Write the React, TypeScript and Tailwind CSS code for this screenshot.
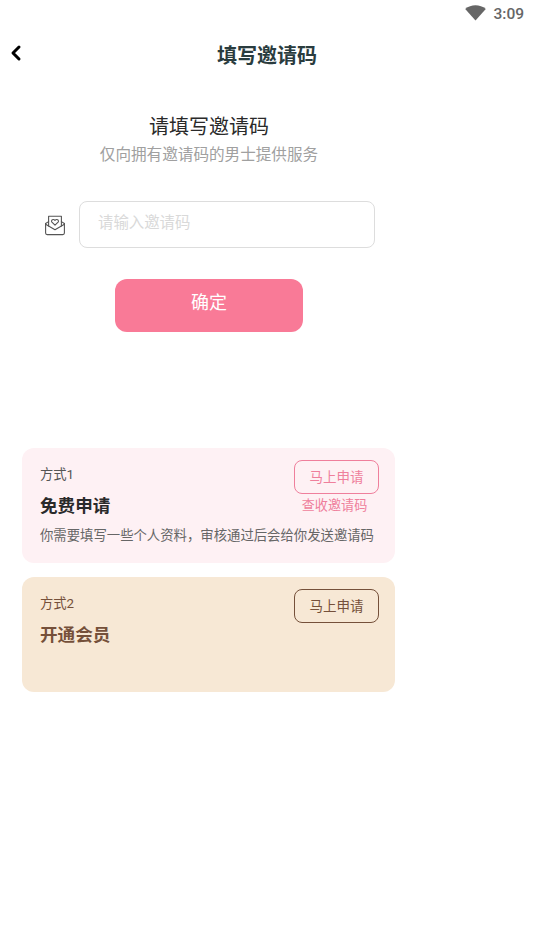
import { ChevronLeft } from 'lucide-react';

function MailIcon() {
  return (
    <svg width="22" height="22" viewBox="0 0 22 22" fill="none" stroke="#555" strokeWidth="1.1" strokeLinejoin="round" strokeLinecap="round">
      <path d="M1.6 9.5 L1.6 19 Q1.6 20.6 3.2 20.6 L18.8 20.6 Q20.4 20.6 20.4 19 L20.4 9.5" />
      <path d="M1.6 9.5 L4.6 7.6 M20.4 9.5 L17.4 7.6" />
      <path d="M1.6 10.2 L11 15.8 L20.4 10.2" />
      <path d="M4.6 12 L4.6 2.2 L17.4 2.2 L17.4 12" />
      <path d="M11 11.2 L7.9 8.1 C6.6 6.3 9.4 4.4 11 6.4 C12.6 4.4 15.4 6.3 14.1 8.1 Z" />
    </svg>
  );
}

function Wifi() {
  return (
    <svg width="21" height="16" viewBox="0 0 21 16" className="mb-[2px]">
      <path d="M0.2 4 C6 -1 15 -1 20.8 4 L10.5 15.6 Z" fill="#666" />
    </svg>
  );
}

function ApplyButton({ className }: { className: string }) {
  return (
    <button className={`flex h-[34px] w-[85px] items-center justify-center rounded-lg border-[1.5px] text-[13.5px] ${className}`}>
      马上申请
    </button>
  );
}

export default function App() {
  return (
    <div className="h-[949px] w-[534px] overflow-hidden bg-white font-['Roboto','Noto_Sans_CJK_SC',sans-serif]">
      <div className="flex h-[28px] items-center justify-end pr-[10px]">
        <Wifi />
        <span className="ml-[7px] mt-[1px] text-[15.5px] font-medium text-[#666]">3:09</span>
      </div>

      <div className="relative mt-[1px] flex h-[54px] items-center justify-center">
        <ChevronLeft className="absolute left-[4px] top-[12px]" size={24} strokeWidth={3} color="#000" />
        <h1 className="text-[20px] font-bold text-[#2a3c3e]">填写邀请码</h1>
      </div>

      <div className="w-[418px]">
        <div className="mt-[30px] flex flex-col items-center">
          <h2 className="text-[20px] leading-[28px] text-[#2a2a2a]">请填写邀请码</h2>
          <p className="mt-[2px] text-[15.6px] leading-[24px] text-[#a0a0a0]">仅向拥有邀请码的男士提供服务</p>
        </div>

        <div className="mt-[34px] flex items-center pl-[44px]">
          <MailIcon />
          <input
            placeholder="请输入邀请码"
            className="ml-[13px] h-[47px] w-[296px] rounded-lg border border-[#ddd] pb-[3px] pl-[18px] text-[15.4px] outline-none placeholder:text-[#d9d9d9]"
          />
        </div>

        <div className="mt-[31px] flex justify-center">
          <button className="h-[53px] w-[188px] rounded-xl bg-[#f97a97] pb-[6px] text-[18px] text-white">确定</button>
        </div>

        <div className="ml-[22px] mt-[116px] flex w-[373px] flex-col gap-[14px]">
          <div className="h-[115px] rounded-xl bg-[#fef1f4] pl-[18px] pr-[16px] pt-[12px]">
            <div className="flex justify-between">
              <div>
                <div className="mt-[5px] text-[13.3px] leading-[20px] text-[#555]">方式1</div>
                <div className="mt-[9px] text-[17.6px] font-bold leading-[25px] text-[#2a2a2a]">免费申请</div>
              </div>
              <div className="flex flex-col items-center">
                <ApplyButton className="border-[#ef7f9c] text-[#ef7f9c]" />
                <span className="mr-[4px] mt-[2px] text-[13.1px] leading-[20px] text-[#ef7f9c]">查收邀请码</span>
              </div>
            </div>
            <p className="mt-[7px] whitespace-nowrap text-[13.36px] leading-[20px] text-[#666]">
              你需要填写一些个人资料，审核通过后会给你发送邀请码
            </p>
          </div>

          <div className="h-[115px] rounded-xl bg-[#f7e8d5] pl-[18px] pr-[16px] pt-[12px]">
            <div className="flex justify-between">
              <div>
                <div className="mt-[5px] text-[13.3px] leading-[20px] text-[#75503a]">方式2</div>
                <div className="mt-[9px] text-[17.6px] font-bold leading-[25px] text-[#75503a]">开通会员</div>
              </div>
              <ApplyButton className="border-[#75503a] text-[#75503a]" />
            </div>
          </div>
        </div>
      </div>
    </div>
  );
}
